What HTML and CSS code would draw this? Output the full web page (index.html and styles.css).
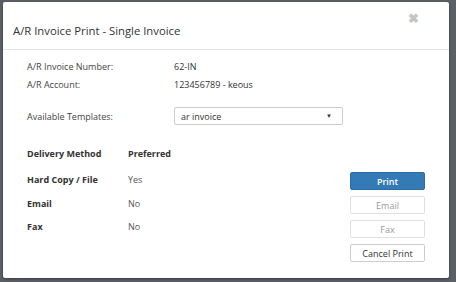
FILE: index.html
```html
<!DOCTYPE html>
<html lang="en">
<head>
    <meta charset="UTF-8">
    <meta name="viewport" content="width=device-width, initial-scale=1.0">
    <title>A/R Invoice Print</title>
    <link rel="stylesheet" href="styles.css">
</head>
<body>

    <div class="modal">
        <div class="modal-header">
            <h4 class="modal-title">A/R Invoice Print - Single Invoice</h4>
            <span class="close">&#10006;</span>
        </div>

        <div class="modal-body">
            <div class="info">
                <span class="label">A/R Invoice Number:</span>
                <span>62-IN</span>
                <span class="label">A/R Account:</span>
                <span>123456789 - keous</span>
            </div>

            <div class="templates">
                <span class="label">Available Templates:</span>
                <div class="select">
                    <span>ar invoice</span>
                    <span class="caret">&#9660;</span>
                </div>
            </div>

            <div class="delivery">
                <table class="methods">
                    <tr>
                        <th>Delivery Method</th>
                        <th>Preferred</th>
                    </tr>
                    <tr>
                        <th>Hard Copy / File</th>
                        <td>Yes</td>
                    </tr>
                    <tr>
                        <th>Email</th>
                        <td>No</td>
                    </tr>
                    <tr>
                        <th>Fax</th>
                        <td>No</td>
                    </tr>
                </table>

                <div class="actions">
                    <button class="btn btn-primary">Print</button>
                    <button class="btn" disabled>Email</button>
                    <button class="btn" disabled>Fax</button>
                    <button class="btn">Cancel Print</button>
                </div>
            </div>
        </div>
    </div>

</body>
</html>
```

FILE: styles.css
```css
body {
    background-color: #5b6067;
    font-family: 'Open Sans', sans-serif;
    color: #333;
    margin: 0;
    padding: 2px 7px 4px 3px;
}
.modal {
    background-color: #fff;
    height: 276px;
    border-radius: 2px;
    box-shadow: 0 1px 3px rgba(0, 0, 0, 0.4);
}
.modal-header {
    height: 47px;
    padding: 0 10px;
    border-bottom: 1px solid #e5e5e5;
    display: flex;
    align-items: center;
    justify-content: space-between;
}
.modal-title {
    margin: 10px 0 0 0;
    font-size: 11.3px;
    font-weight: normal;
}
.close {
    color: #c4c4c4;
    font-size: 13px;
    font-weight: bold;
    align-self: flex-start;
    margin: 7px 20px 0 0;
}
.modal-body {
    padding: 8px 24px 0 24px;
    font-size: 9px;
}
.info, .templates {
    display: grid;
    grid-template-columns: 147px 1fr;
    align-items: center;
}
.info span {
    height: 18px;
    line-height: 18px;
}
.label {
    color: #444;
}
.templates {
    margin-top: 13px;
}
.select {
    width: 151px;
    height: 16px;
    border: 1px solid #ccc;
    border-radius: 2px;
    padding: 0 10px 0 6px;
    display: flex;
    align-items: center;
    justify-content: space-between;
}
.caret {
    font-size: 6px;
    color: #333;
}
.delivery {
    display: flex;
    justify-content: space-between;
    margin-top: 14px;
}
.methods {
    border-collapse: collapse;
    align-self: flex-start;
}
.methods th, .methods td {
    text-align: left;
    padding: 0;
    height: 23.5px;
}
.methods tr:first-child th {
    height: 29px;
}
.methods th {
    width: 101px;
    font-weight: bold;
    color: #333;
}
.methods td {
    color: #555;
}
.actions {
    display: flex;
    flex-direction: column;
    gap: 6px;
    margin-top: 33px;
}
.btn {
    width: 75px;
    height: 18px;
    font-family: 'Open Sans', sans-serif;
    font-size: 9px;
    background-color: #fff;
    color: #333;
    border: 1px solid #ccc;
    border-radius: 2px;
    padding: 0;
}
.btn:disabled {
    color: #999;
    border-color: #e0e0e0;
}
.btn-primary {
    background-color: #337ab7;
    border-color: #2e6da4;
    color: #fff;
    font-weight: 600;
}
```
